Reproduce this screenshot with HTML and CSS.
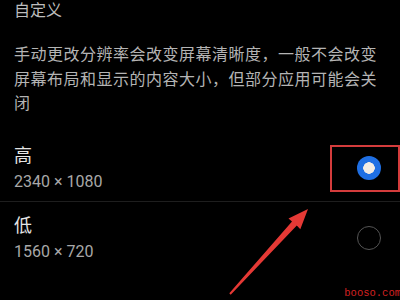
FILE: index.html
```html
<!DOCTYPE html>
<html>
<head>
    <title>分辨率</title>
    <link rel="stylesheet" href="styles.css">
</head>
<body>
    <div class="screen">
        <div class="title">自定义</div>
        <p class="desc">手动更改分辨率会改变屏幕清晰度，一般不会改变屏幕布局和显示的内容大小，但部分应用可能会关闭</p>

        <div class="option">
            <div class="option-text">
                <div class="option-name">高</div>
                <div class="option-size">2340 × 1080</div>
            </div>
            <span class="radio checked"></span>
        </div>

        <div class="option">
            <div class="option-text">
                <div class="option-name">低</div>
                <div class="option-size">1560 × 720</div>
            </div>
            <span class="radio"></span>
        </div>

        <!-- annotations drawn over the screenshot -->
        <div class="highlight"></div>
        <svg class="arrow" width="400" height="300" viewBox="0 0 400 300">
            <polygon points="308,209 300.3,229.2 296.8,225.5 230.7,294.7 229.3,293.3 292,221.6 288.5,218.4" fill="#e53935"/>
        </svg>
        <div class="watermark">booso.com</div>
    </div>
</body>
</html>
```

FILE: styles.css
```css
body {
    margin: 0;
    background: #000;
    font-family: Roboto, "Noto Sans CJK SC", sans-serif;
}
.screen {
    position: relative;
    width: 400px;
    height: 300px;
    overflow: hidden;
    background: #000;
}
.title {
    padding: 0 14px;
    font-size: 16px;
    line-height: 22px;
    color: #bdbdbd;
}
.desc {
    margin: 21px 0 16px;
    padding: 0 20px 0 14px;
    font-size: 16px;
    line-height: 24.5px;
    letter-spacing: 0.5px;
    color: #b4b4b4;
}
.option {
    display: flex;
    align-items: center;
    justify-content: space-between;
    padding: 10.5px 19px 8px 14px;
}
.option + .option {
    border-top: 1px solid #1e1e1e;
}
.option:first-of-type {
    padding-top: 10px;
}
.option-name {
    font-size: 18px;
    line-height: 26px;
    color: #e4e4e4;
}
.option-size {
    margin-top: 2px;
    font-size: 16px;
    line-height: 22px;
    color: #a8a8a8;
}
.radio {
    width: 24px;
    height: 24px;
    box-sizing: border-box;
    border: 1.5px solid #555;
    border-radius: 50%;
}
.radio.checked {
    border: none;
    background: radial-gradient(circle, #f3ece4 0, #f3ece4 5.5px, #1f6fe3 6px);
}
.highlight {
    position: absolute;
    left: 330px;
    top: 145px;
    width: 70px;
    height: 47px;
    box-sizing: border-box;
    border: 2px solid #d43c3c;
}
.arrow {
    position: absolute;
    left: 0;
    top: 0;
}
.watermark {
    position: absolute;
    right: -1px;
    bottom: 1px;
    font-family: "Liberation Mono", monospace;
    font-size: 10.5px;
    color: #d42020;
}
```
